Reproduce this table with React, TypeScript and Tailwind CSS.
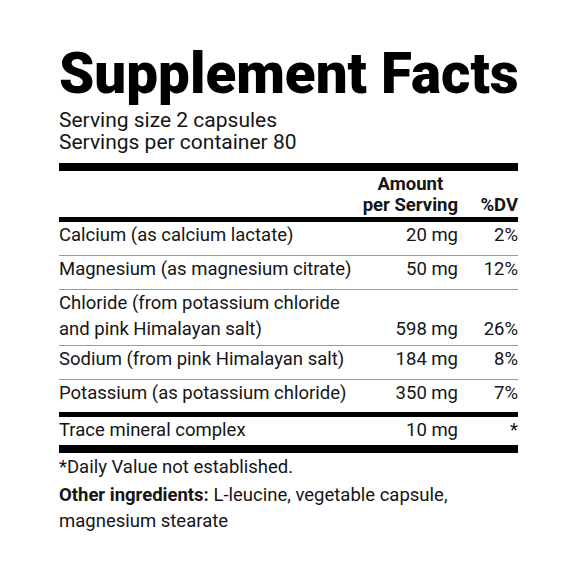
const rows: { name: string[]; amount: string; dv: string; pb: string; border: string }[] = [
  { name: ["Calcium (as calcium lactate)"], amount: "20 mg", dv: "2%", pb: "pb-[7px]", border: "border-b border-[#9a9a9a]" },
  { name: ["Magnesium (as magnesium citrate)"], amount: "50 mg", dv: "12%", pb: "pb-[7px]", border: "border-b border-[#9a9a9a]" },
  {
    name: ["Chloride (from potassium chloride", "and pink Himalayan salt)"],
    amount: "598 mg",
    dv: "26%",
    pb: "pb-[3px]",
    border: "border-b border-[#9a9a9a]",
  },
  { name: ["Sodium (from pink Himalayan salt)"], amount: "184 mg", dv: "8%", pb: "pb-[7px]", border: "border-b border-[#9a9a9a]" },
  { name: ["Potassium (as potassium chloride)"], amount: "350 mg", dv: "7%", pb: "pb-[6px]", border: "border-b-[5px] border-black" },
  { name: ["Trace mineral complex"], amount: "10 mg", dv: "*", pb: "pb-[2px]", border: "border-b-[8px] border-black" },
];

export default function App() {
  return (
    <div className="w-[576px] h-[576px] bg-white text-[#151515] font-['Roboto',sans-serif]">
      <div className="pt-[46px] pl-[59px] w-[518px]">
        <h1 className="text-[56.5px] leading-none font-black text-black whitespace-nowrap">Supplement Facts</h1>

        <div className="mt-[6px] text-[21px] leading-[22px] whitespace-nowrap">
          <div>Serving size 2 capsules</div>
          <div>Servings per container 80</div>
        </div>

        <div className="mt-[10px] h-2 bg-black" />

        {/* column header */}
        <div className="flex items-end pt-[3px] pb-[1px] text-[18.5px] leading-[21px] font-bold border-b-[5px] border-black whitespace-nowrap">
          <div className="flex-1" />
          <div className="flex flex-col items-center">
            <span>Amount</span>
            <span>per Serving</span>
          </div>
          <div className="w-[60px] text-right">%DV</div>
        </div>

        {rows.map((r, i) => (
          <div key={i} className={`flex items-end text-[18.5px] leading-[26px] whitespace-nowrap ${r.pb} ${r.border}`}>
            <div className="flex-1">
              {r.name.map((n, j) => (
                <div key={j}>{n}</div>
              ))}
            </div>
            <div className="w-[90px] text-right">{r.amount}</div>
            <div className="w-[60px] text-right">{r.dv}</div>
          </div>
        ))}

        <div className="mt-[2px] text-[18.5px] leading-[24px] whitespace-nowrap">*Daily Value not established.</div>
        <div className="mt-[3px] text-[18.5px] leading-[26px] whitespace-nowrap">
          <span className="font-bold">Other ingredients:</span> L-leucine, vegetable capsule,
          <br />
          magnesium stearate
        </div>
      </div>
    </div>
  );
}
